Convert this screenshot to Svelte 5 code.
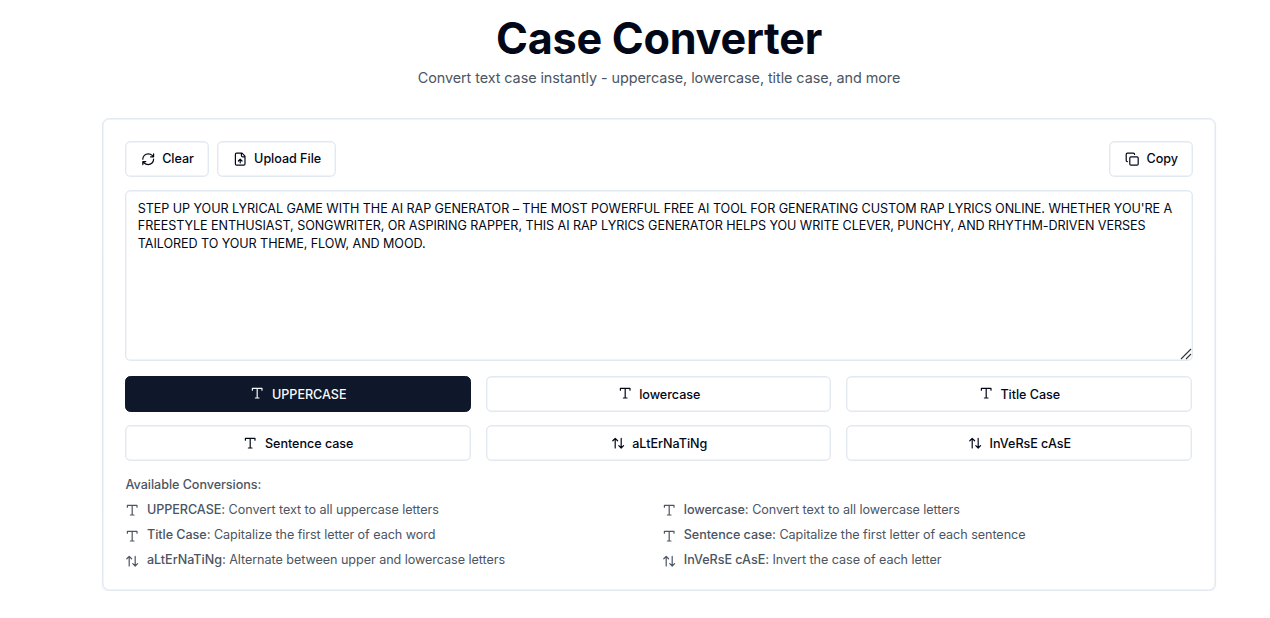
<script>
  let text = $state("STEP UP YOUR LYRICAL GAME WITH THE AI RAP GENERATOR – THE MOST POWERFUL FREE AI TOOL FOR GENERATING CUSTOM RAP LYRICS ONLINE. WHETHER YOU'RE A FREESTYLE ENTHUSIAST, SONGWRITER, OR ASPIRING RAPPER, THIS AI RAP LYRICS GENERATOR HELPS YOU WRITE CLEVER, PUNCHY, AND RHYTHM-DRIVEN VERSES TAILORED TO YOUR THEME, FLOW, AND MOOD.");
  let active = $state('UPPERCASE');
  const modes = [
    { name: 'UPPERCASE', icon: 'type', about: 'Convert text to all uppercase letters' },
    { name: 'lowercase', icon: 'type', about: 'Convert text to all lowercase letters' },
    { name: 'Title Case', icon: 'type', about: 'Capitalize the first letter of each word' },
    { name: 'Sentence case', icon: 'type', about: 'Capitalize the first letter of each sentence' },
    { name: 'aLtErNaTiNg', icon: 'arrows', about: 'Alternate between upper and lowercase letters' },
    { name: 'InVeRsE cAsE', icon: 'arrows', about: 'Invert the case of each letter' }
  ];
</script>

{#snippet icon(kind)}
  <svg class="icon" viewBox="0 0 24 24" aria-hidden="true">
    {#if kind === 'type'}
      <path d="M4 7V4h16v3M9 20h6M12 4v16" />
    {:else if kind === 'arrows'}
      <path d="m3 8 4-4 4 4M7 4v16M21 16l-4 4-4-4M17 20V4" />
    {:else if kind === 'refresh'}
      <path d="M3 12a9 9 0 0 1 9-9 9.75 9.75 0 0 1 6.74 2.74L21 8M21 3v5h-5M21 12a9 9 0 0 1-9 9 9.75 9.75 0 0 1-6.74-2.74L3 16M8 16H3v5" />
    {:else if kind === 'upload'}
      <path d="M15 2H6a2 2 0 0 0-2 2v16a2 2 0 0 0 2 2h12a2 2 0 0 0 2-2V7ZM14 2v4a2 2 0 0 0 2 2h4M12 12v6M15 15l-3-3-3 3" />
    {:else}
      <rect x="8" y="8" width="14" height="14" rx="2" />
      <path d="M4 16c-1.100 0-2-.9-2-2V4c0-1.100.9-2 2-2h10c1.100 0 2 .9 2 2" />
    {/if}
  </svg>
{/snippet}

<main>
  <header>
    <h1>Case Converter</h1>
    <p>Convert text case instantly - uppercase, lowercase, title case, and more</p>
  </header>
  <section class="card">
    <div class="toolbar">
      <div class="group">
        <button onclick={() => (text = '')}>{@render icon('refresh')}Clear</button>
        <button>{@render icon('upload')}Upload File</button>
      </div>
      <button>{@render icon('copy')}Copy</button>
    </div>
    <div class="editor">
      <textarea bind:value={text} spellcheck="false"></textarea>
      <svg class="grip" viewBox="0 0 12 12" aria-hidden="true"><path d="M1 11 11 1M6 11l5-5" /></svg>
    </div>
    <div class="modes">
      {#each modes as mode}
        <button class:active={active === mode.name} onclick={() => (active = mode.name)}>{@render icon(mode.icon)}<span>{mode.name}</span></button>
      {/each}
    </div>
    <div class="help">
      <h2>Available Conversions:</h2>
      <ul>
        {#each modes as mode}
          <li>{@render icon(mode.icon)}<span><strong>{mode.name}:</strong> {mode.about}</span></li>
        {/each}
      </ul>
    </div>
  </section>
</main>

<style>
  :global(body) { background: #fff; }
  * { box-sizing: border-box; }
  main {
    width: 1113.2px;
    margin-left: 102.4px;
    padding-top: 17px;
    font-family: Inter, sans-serif;
    color: #020817;
  }
  header { text-align: center; }
  h1 { margin: 0; font-size: 43.2px; line-height: 43.2px; font-weight: 700; letter-spacing: -0.27px; }
  header p { margin: 7.2px 0 0; font-size: 14.4px; line-height: 21.6px; letter-spacing: -0.07px; color: #4b5563; }
  .card {
    margin-top: 29.4px;
    padding: 21.6px 21.6px 20.6px;
    border: 1px solid #e2e8f0;
    border-radius: 7.2px;
    box-shadow: inset 0 0 0 0.5px #e2e8f0, 0 1px 2px rgb(0 0 0 / 5%);
  }
  .toolbar { display: flex; justify-content: space-between; margin-bottom: 13.4px; }
  .group { display: flex; gap: 8px; }
  button {
    display: inline-flex;
    align-items: center;
    justify-content: center;
    gap: 7.2px;
    height: 36px;
    padding: 0 14px 0 14.6px;
    border: 1px solid #e2e8f0;
    border-radius: 5.4px;
    background: #fff;
    color: #020817;
    font: 500 12.6px/18px Inter, sans-serif;
    letter-spacing: -0.04px;
    box-shadow: inset 0 0 0 0.4px #e2e8f0;
  }
  .icon {
    width: 14.4px;
    height: 14.4px;
    flex: none;
    fill: none;
    stroke: currentColor;
    stroke-width: 2;
    stroke-linecap: round;
    stroke-linejoin: round;
  }
  .editor { position: relative; }
  textarea {
    display: block;
    width: 100%;
    height: 171px;
    padding: 8.6px 11.8px;
    border: 1px solid #e2e8f0;
    border-radius: 5.4px;
    background: #fff;
    color: #020817;
    font: 400 12.6px/17.5px Inter, sans-serif;
    letter-spacing: -0.072px;
    resize: none;
    outline: none;
    box-shadow: inset 0 0 0 0.4px #e2e8f0;
  }
  .grip { position: absolute; right: 1px; bottom: 1px; width: 12px; height: 12px; fill: none; stroke: #333; stroke-width: 1.1; }
  .modes { display: grid; grid-template-columns: repeat(3, 1fr); gap: 13.4px 14.6px; margin: 14.6px 1px 0 0; }
  .modes span { padding-top: 2px; }
  .modes .icon { margin: -1px 0 0 0.4px; }
  .active { background: #0f172a; border-color: #0f172a; color: #f8fafc; box-shadow: none; }
  .help { margin-top: 14.4px; font-size: 12.6px; line-height: 18px; letter-spacing: -0.05px; color: #4b5563; }
  h2 { margin: 0 0 7.2px 0.6px; font-size: 12.6px; line-height: 18px; font-weight: 500; }
  ul { display: grid; grid-template-columns: 1fr 1fr; gap: 7.2px; margin: 0 1.6px 0 0; padding: 0; list-style: none; }
  li { display: flex; align-items: flex-start; gap: 7.6px; }
  li .icon { margin-top: 2.4px; }
  strong { font-weight: 500; }
</style>
